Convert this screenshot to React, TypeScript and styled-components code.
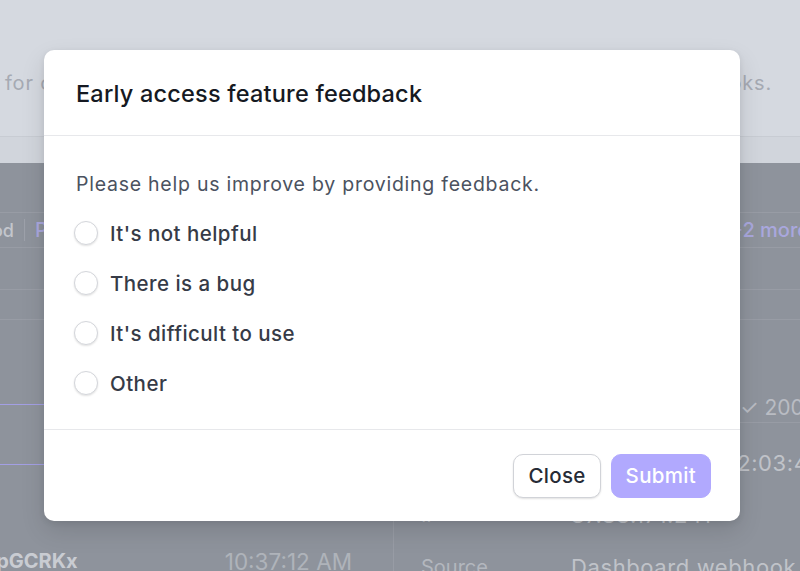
import React from "react";
import styled, { createGlobalStyle } from "styled-components";

const GlobalStyle = createGlobalStyle`
  html, body {
    margin: 0;
    padding: 0;
    background: #8e939c;
  }
  body {
    font-family: Inter, "Noto Sans", "Liberation Sans", sans-serif;
    -webkit-font-smoothing: antialiased;
    overflow: hidden;
  }
  * {
    box-sizing: border-box;
  }
`;

const options = [
  "It's not helpful",
  "There is a bug",
  "It's difficult to use",
  "Other",
];

const requests = [{ id: "req_1pGCRKx", time: "10:37:12 AM" }];

const details = [
  { label: "Time", value: "Oct 24, 2023, 12:03:47 PM" },
  { label: "IP", value: "87.88.171.241" },
  { label: "Source", value: "Dashboard webhook test" },
];

export default function App() {
  return (
    <>
      <GlobalStyle />
      <Page>
        <TopBar>
          <Faded>for configuring</Faded>
          <Faded>webhooks.</Faded>
        </TopBar>
        <SubBar />
        <FullRow $height={50} />
        <FullRow $height={35}>
          <FilterStrip>
            <FilterInner>
              <FilterLabel>Method</FilterLabel>
              <FilterDivider />
              <FilterChip>Path</FilterChip>
            </FilterInner>
          </FilterStrip>
          <FilterStrip $end>
            <FilterChip>Status</FilterChip>
            <FilterDivider />
            <FilterChip>+2 more</FilterChip>
          </FilterStrip>
        </FullRow>
        <FullRow $height={42} />
        <FullRow $height={30} />
        <Columns>
          <ListPane>
            <SearchBox>Search requests</SearchBox>
            <ListInner>
              {requests.map((r) => (
                <ListItem key={r.id}>
                  <ItemId>{r.id}</ItemId>
                  <ItemTime>{r.time}</ItemTime>
                </ListItem>
              ))}
            </ListInner>
          </ListPane>
          <DetailPane>
            <DetailHead>
              <DetailLabel>Request</DetailLabel>
              <Method>POST /v1</Method>
              <Status>✓ 200 OK</Status>
            </DetailHead>
            {details.map((d) => (
              <DetailRow key={d.label}>
                <DetailLabel>{d.label}</DetailLabel>
                <DetailValue>{d.value}</DetailValue>
              </DetailRow>
            ))}
          </DetailPane>
        </Columns>

        <Dialog role="dialog" aria-labelledby="dlg-title">
          <DialogHeader>
            <Title id="dlg-title">Early access feature feedback</Title>
          </DialogHeader>
          <DialogBody>
            <Description>Please help us improve by providing feedback.</Description>
            <OptionList>
              {options.map((o) => (
                <Option key={o}>
                  <Radio type="radio" name="feedback" value={o} />
                  <OptionText>{o}</OptionText>
                </Option>
              ))}
            </OptionList>
          </DialogBody>
          <DialogFooter>
            <Button>Close</Button>
            <Button $primary disabled>
              Submit
            </Button>
          </DialogFooter>
        </Dialog>
      </Page>
    </>
  );
}

const Page = styled.div`
  position: relative;
  width: 800px;
  height: 571px;
  overflow: hidden;
  background: #8e939c;
  display: flex;
  flex-direction: column;
`;

const TopBar = styled.div`
  flex: 0 0 137px;
  background: #d5d9e0;
  border-bottom: 1px solid #c8ccd3;
  display: flex;
  align-items: center;
  justify-content: space-between;
  padding: 30px 28px 0 5px;
`;

const Faded = styled.span`
  font-size: 20px;
  letter-spacing: 0.8px;
  color: #a6aab3;
`;

const SubBar = styled.div`
  flex: 0 0 26px;
  background: #d1d5dc;
`;

const FullRow = styled.div<{ $height: number }>`
  flex: 0 0 ${(p) => p.$height}px;
  border-bottom: 1px solid #989ca5;
  display: flex;
  align-items: center;
  justify-content: space-between;
`;

const FilterStrip = styled.div<{ $end?: boolean }>`
  display: flex;
  align-items: center;
  gap: 10px;
  overflow: hidden;
  margin-right: ${(p) => (p.$end ? "-9px" : "0")};
`;

const FilterInner = styled.div`
  display: flex;
  align-items: center;
  gap: 10px;
  margin-left: -52px;
`;

const FilterLabel = styled.span`
  font-size: 18px;
  font-weight: 500;
  color: #c3c6cc;
`;

const FilterChip = styled.span`
  font-size: 20px;
  font-weight: 500;
  color: #a9a7dd;
  white-space: nowrap;
`;

const FilterDivider = styled.span`
  width: 1px;
  height: 22px;
  background: #9da1aa;
`;

const Columns = styled.div`
  flex: 1;
  display: grid;
  grid-template-columns: 393px 1fr;
  min-height: 0;
`;

const ListPane = styled.div`
  overflow: hidden;
  padding-top: 84px;
  display: flex;
  flex-direction: column;
`;

const SearchBox = styled.div`
  height: 64px;
  border-top: 1px solid #a39fe4;
  border-bottom: 1px solid #a39fe4;
  display: flex;
  align-items: center;
  padding-left: 80px;
  font-size: 20px;
  color: #aeb2b9;
`;

const ListInner = styled.div`
  margin-left: -52px;
  padding-top: 64px;
  display: flex;
  flex-direction: column;
`;

const ListItem = styled.div`
  height: 64px;
  display: flex;
  align-items: center;
  justify-content: space-between;
  padding: 0 41px 0 0;
`;

const ItemId = styled.span`
  font-size: 20px;
  font-weight: 700;
  color: #c9ccd2;
`;

const ItemTime = styled.span`
  font-size: 22.5px;
  color: #afb3ba;
`;

const DetailPane = styled.div`
  border-left: 1px solid #989ca5;
  padding-top: 74px;
  display: flex;
  flex-direction: column;
`;

const DetailHead = styled.div`
  height: 29px;
  border-bottom: 1px solid #989ca5;
  display: grid;
  grid-template-columns: 150px 169px auto;
  align-items: center;
  padding: 0 0 2px 27px;
  margin-bottom: 14px;
  white-space: nowrap;
`;

const Method = styled.span`
  font-size: 20px;
  color: #b9bcc3;
`;

const Status = styled.span`
  font-size: 21px;
  color: #b9bcc3;
`;

const DetailRow = styled.div`
  height: 52px;
  display: grid;
  grid-template-columns: 150px 1fr;
  align-items: center;
  padding-left: 27px;
  white-space: nowrap;
`;

const DetailLabel = styled.span`
  font-size: 20px;
  color: #b3b7be;
`;

const DetailValue = styled.span`
  font-size: 22px;
  letter-spacing: 0.6px;
  color: #c0c3c9;
`;

const Dialog = styled.div`
  position: absolute;
  top: 50px;
  left: 44px;
  width: 696px;
  height: 471px;
  background: #ffffff;
  border-radius: 10px;
  box-shadow: 0 10px 25px rgba(0, 0, 0, 0.12), 0 2px 6px rgba(0, 0, 0, 0.08);
  display: flex;
  flex-direction: column;
  overflow: hidden;
`;

const DialogHeader = styled.div`
  height: 86px;
  padding: 2px 32px 0;
  display: flex;
  align-items: center;
  border-bottom: 1px solid #e7e8eb;
`;

const Title = styled.h2`
  margin: 0;
  font-size: 23.5px;
  font-weight: 500;
  color: #151922;
  letter-spacing: 0.2px;
`;

const DialogBody = styled.div`
  flex: 1;
  padding: 34px 32px 0;
  border-bottom: 1px solid #e7e8eb;
`;

const Description = styled.p`
  margin: 0;
  font-size: 19.5px;
  line-height: 28px;
  letter-spacing: 0.75px;
  color: #4b5260;
`;

const OptionList = styled.div`
  margin-top: 20px;
  display: flex;
  flex-direction: column;
  gap: 20px;
`;

const Option = styled.label`
  height: 30px;
  display: flex;
  align-items: center;
  gap: 12px;
  cursor: pointer;
`;

const Radio = styled.input`
  appearance: none;
  margin: 0 0 0 -2px;
  width: 24px;
  height: 24px;
  border-radius: 50%;
  border: 1px solid #d4d6db;
  background: #fff;
  box-shadow: 0 1px 2px rgba(0, 0, 0, 0.12);
`;

const OptionText = styled.span`
  font-size: 20.5px;
  font-weight: 500;
  letter-spacing: 0.45px;
  color: #363b47;
`;

const DialogFooter = styled.div`
  height: 91px;
  padding: 0 29px;
  display: flex;
  align-items: center;
  justify-content: flex-end;
  gap: 10px;
`;

const Button = styled.button<{ $primary?: boolean }>`
  height: 44px;
  padding: 0 14px;
  border-radius: 10px;
  font-family: inherit;
  font-size: 20.5px;
  font-weight: 500;
  letter-spacing: 0.3px;
  border: 1px solid ${(p) => (p.$primary ? "#b1a9fe" : "#d1d3d8")};
  background: ${(p) => (p.$primary ? "#b1a9fe" : "#ffffff")};
  color: ${(p) => (p.$primary ? "#ffffff" : "#262b36")};
  box-shadow: ${(p) => (p.$primary ? "none" : "0 1px 2px rgba(0, 0, 0, 0.12)")};
  cursor: pointer;
  &:disabled {
    cursor: not-allowed;
  }
`;
